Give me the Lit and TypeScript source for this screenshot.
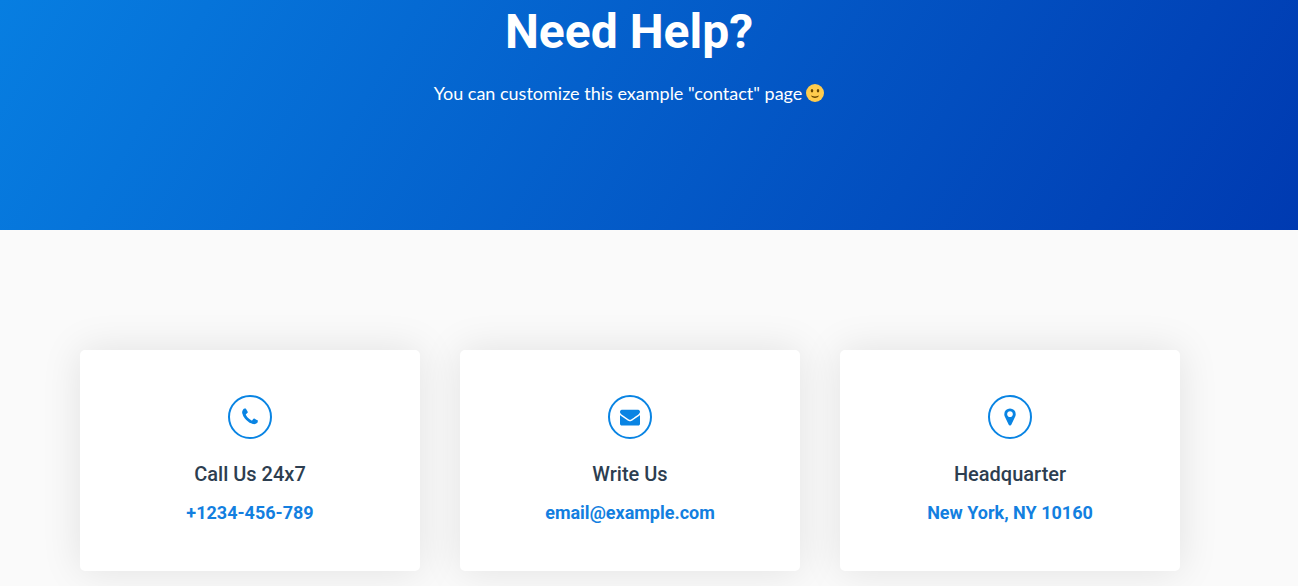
import { LitElement, html, css, svg } from "lit";
import { customElement } from "lit/decorators.js";

const icons = {
  phone: svg`<path transform="translate(192 0)" d="M1408 1240q0 27-10 70.500t-21 68.500q-21 50-122 106q-94 51-186 51q-27 0-53-3.500t-57.500-12.500t-47-14.500t-55.500-20.500t-49-18q-98-35-175-83q-127-79-264-216t-216-264q-48-77-83-175q-3-9-18-49t-20.500-55.500t-14.500-47t-12.500-57.500t-3.500-53q0-92 51-186q56-101 106-122q25-11 68.500-21t70.500-10q14 0 21 3q18 6 53 76q11 19 30 54t35 63.500t31 53.500q3 4 17.500 25t21.500 35.500t7 28.500q0 20-28.500 50t-62 55t-62 53t-28.500 46q0 9 5 22.500t8.500 20.500t14 24t11.500 19q76 137 174 235t235 174q2 1 19 11.500t24 14t20.500 8.500t22.500 5q18 0 46-28.500t53-62t55-62t50-28.500q14 0 28.500 7t35.500 21.500t25 17.500q25 15 53.500 31t63.500 35t54 30q70 35 76 53q3 7 3 21z"/>`,
  mail: svg`<path d="M1792 710v794q0 66-47 113t-113 47h-1472q-66 0-113-47t-47-113v-794q44 49 101 87q362 246 497 345q57 42 92.500 65.500t94.500 48t110 24.500h2q51 0 110-24.500t94.500-48t92.500-65.500q170-123 498-345q57-39 100-87zm0-294q0 79-49 151t-122 123q-376 261-468 325q-10 7-42.500 30.500t-54 38t-52 32.500t-57.500 27t-50 9h-2q-23 0-50-9t-57.500-27t-52-32.500t-54-38t-42.500-30.500q-91-64-262-182.500t-205-142.500q-62-42-117-115.500t-55-136.500q0-78 41.500-130t118.500-52h1472q65 0 112.500 47t47.500 113z"/>`,
  pin: svg`<path transform="translate(384 0)" d="M768 640q0-106-75-181t-181-75t-181 75t-75 181t75 181t181 75t181-75t75-181zm256 0q0 109-33 179l-364 774q-16 33-47.500 52t-67.500 19t-67.500-19t-46.500-52l-365-774q-33-70-33-179q0-212 150-362t362-150t362 150t150 362z"/>`,
};

@customElement("app-root")
export class AppRoot extends LitElement {
  static styles = css`
    :host { display: block; min-height: 100vh; background: #fafafa; font-family: Roboto, sans-serif; }
    .hero {
      box-sizing: border-box; min-height: 230px; padding: 0 40px 0 0; text-align: center; color: #fff;
      background: linear-gradient(120deg, #077ee1 0%, #003ab1 100%);
    }
    h1 { margin: 0; font-size: 48px; line-height: 64px; font-weight: 700; }
    .lead {
      display: flex; justify-content: center; align-items: center; gap: 4px; margin: 14px 0 0;
      font: 400 18px/30px Lato, sans-serif;
    }
    .smile { width: 18px; height: 18px; }
    .cards {
      display: grid; grid-template-columns: repeat(3, 1fr); gap: 40px;
      max-width: 1100px; margin: 0 auto; padding: 120px 118px 15px 80px;
    }
    .card {
      display: flex; flex-direction: column; align-items: center; padding: 45px 20px 43px;
      background: #fff; border-radius: 5px; box-shadow: 0 0 40px rgba(0, 0, 0, 0.1);
    }
    .badge {
      display: grid; place-items: center; box-sizing: border-box; width: 44px; height: 44px;
      border: 2px solid #0984e3; border-radius: 50%; color: #0984e3;
    }
    .glyph { width: 20px; height: 20px; fill: currentColor; }
    h2 { margin: 22px 0 0; font-size: 20px; line-height: 26px; font-weight: 500; color: #2d3e50; }
    a { margin-top: 10px; font-size: 18px; line-height: 31px; font-weight: 700; color: #137fe0; text-decoration: none; }
  `;

  private card(icon: unknown, title: string, text: string, href: string) {
    return html`<article class="card">
      <span class="badge"><svg class="glyph" viewBox="0 0 1792 1792" aria-hidden="true">${icon}</svg></span>
      <h2>${title}</h2>
      <a href=${href}>${text}</a>
    </article>`;
  }

  render() {
    return html`
      <header class="hero">
        <h1>Need Help?</h1>
        <p class="lead">You can customize this example "contact" page
          <svg class="smile" viewBox="0 0 36 36" role="img" aria-label="smile">
            <circle cx="18" cy="18" r="18" fill="#ffcc4d"/>
            <path fill="#664500" d="M10.515 23.621C10.560 23.800 11.683 28 18 28c6.318 0 7.440-4.200 7.485-4.379.055-.217-.043-.442-.237-.554-.195-.111-.439-.078-.600.077C24.629 23.163 22.694 25 18 25s-6.630-1.837-6.648-1.855C11.256 23.050 11.128 23 11 23c-.084 0-.169.021-.246.064-.196.112-.294.339-.239.557z"/>
            <ellipse cx="12" cy="13.500" rx="2.500" ry="3.500" fill="#664500"/>
            <ellipse cx="24" cy="13.500" rx="2.500" ry="3.500" fill="#664500"/>
          </svg>
        </p>
      </header>
      <main class="cards">
        ${this.card(icons.phone, "Call Us 24x7", "+1234-456-789", "tel:+1234456789")}
        ${this.card(icons.mail, "Write Us", "email@example.com", "mailto:email@example.com")}
        ${this.card(icons.pin, "Headquarter", "New York, NY 10160", "#map")}
      </main>
    `;
  }
}
